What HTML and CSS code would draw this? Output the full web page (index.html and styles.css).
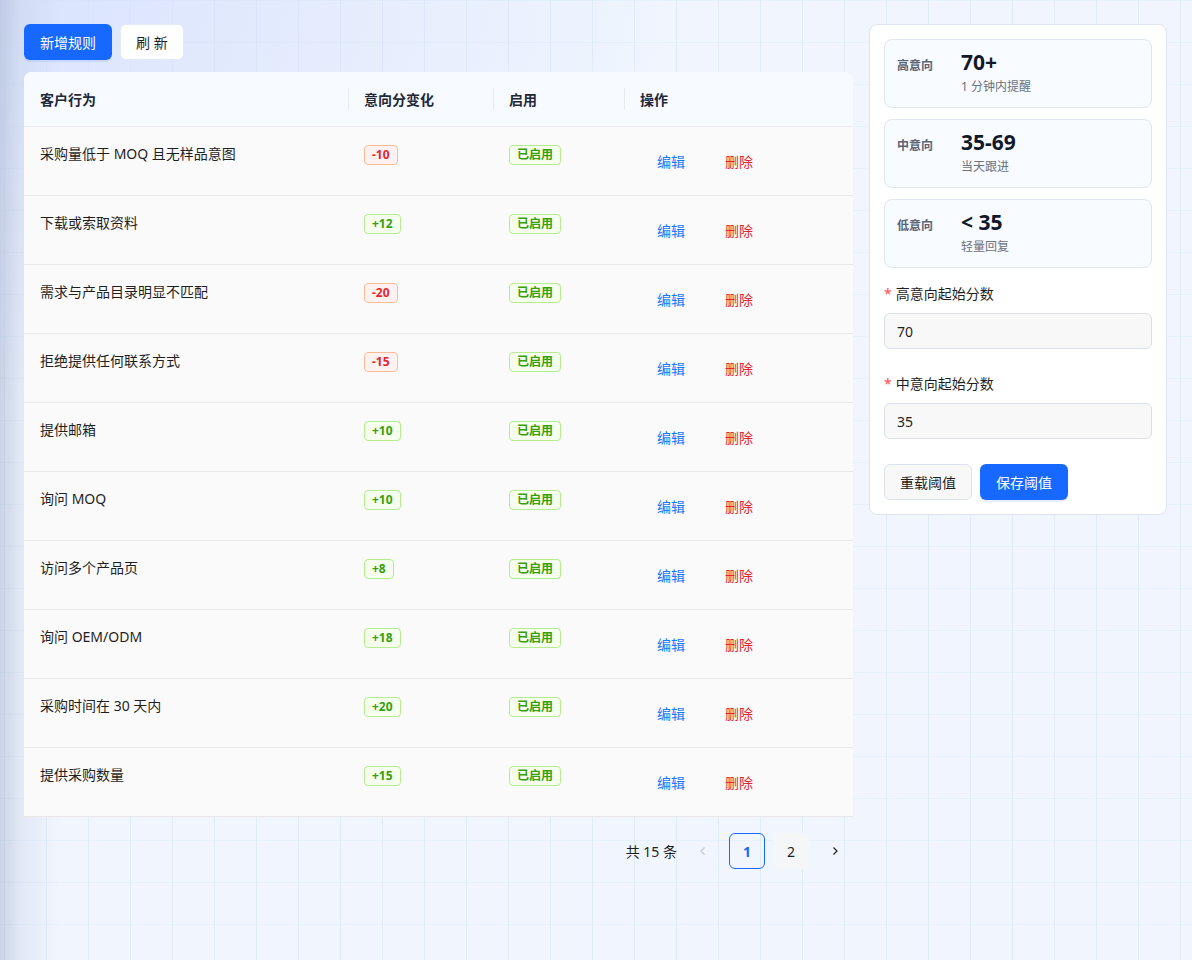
FILE: index.html
```html
<!DOCTYPE html>
<html lang="zh-CN">
<head>
    <meta charset="UTF-8">
    <meta name="viewport" content="width=device-width, initial-scale=1.0">
    <title>意向评分规则</title>
    <link rel="stylesheet" href="styles.css">
</head>
<body>
    <div class="page">
        <div class="main">
            <div class="toolbar">
                <button class="btn btn-primary">新增规则</button>
                <button class="btn btn-default">刷 新</button>
            </div>
            <div class="table-card">
                <table class="rules">
                    <colgroup>
                        <col style="width:324px">
                        <col style="width:145px">
                        <col style="width:131px">
                        <col>
                    </colgroup>
                    <thead>
                        <tr>
                            <th>客户行为</th>
                            <th class="sep">意向分变化</th>
                            <th class="sep">启用</th>
                            <th class="sep">操作</th>
                        </tr>
                    </thead>
                    <tbody>
                        <tr>
                            <td>采购量低于 MOQ 且无样品意图</td>
                            <td><span class="tag tag-red">-10</span></td>
                            <td><span class="tag tag-green">已启用</span></td>
                            <td class="actions"><a class="link">编辑</a><a class="link danger">删除</a></td>
                        </tr>
                        <tr>
                            <td>下载或索取资料</td>
                            <td><span class="tag tag-green">+12</span></td>
                            <td><span class="tag tag-green">已启用</span></td>
                            <td class="actions"><a class="link">编辑</a><a class="link danger">删除</a></td>
                        </tr>
                        <tr>
                            <td>需求与产品目录明显不匹配</td>
                            <td><span class="tag tag-red">-20</span></td>
                            <td><span class="tag tag-green">已启用</span></td>
                            <td class="actions"><a class="link">编辑</a><a class="link danger">删除</a></td>
                        </tr>
                        <tr>
                            <td>拒绝提供任何联系方式</td>
                            <td><span class="tag tag-red">-15</span></td>
                            <td><span class="tag tag-green">已启用</span></td>
                            <td class="actions"><a class="link">编辑</a><a class="link danger">删除</a></td>
                        </tr>
                        <tr>
                            <td>提供邮箱</td>
                            <td><span class="tag tag-green">+10</span></td>
                            <td><span class="tag tag-green">已启用</span></td>
                            <td class="actions"><a class="link">编辑</a><a class="link danger">删除</a></td>
                        </tr>
                        <tr>
                            <td>询问 MOQ</td>
                            <td><span class="tag tag-green">+10</span></td>
                            <td><span class="tag tag-green">已启用</span></td>
                            <td class="actions"><a class="link">编辑</a><a class="link danger">删除</a></td>
                        </tr>
                        <tr>
                            <td>访问多个产品页</td>
                            <td><span class="tag tag-green">+8</span></td>
                            <td><span class="tag tag-green">已启用</span></td>
                            <td class="actions"><a class="link">编辑</a><a class="link danger">删除</a></td>
                        </tr>
                        <tr>
                            <td>询问 OEM/ODM</td>
                            <td><span class="tag tag-green">+18</span></td>
                            <td><span class="tag tag-green">已启用</span></td>
                            <td class="actions"><a class="link">编辑</a><a class="link danger">删除</a></td>
                        </tr>
                        <tr>
                            <td>采购时间在 30 天内</td>
                            <td><span class="tag tag-green">+20</span></td>
                            <td><span class="tag tag-green">已启用</span></td>
                            <td class="actions"><a class="link">编辑</a><a class="link danger">删除</a></td>
                        </tr>
                        <tr>
                            <td>提供采购数量</td>
                            <td><span class="tag tag-green">+15</span></td>
                            <td><span class="tag tag-green">已启用</span></td>
                            <td class="actions"><a class="link">编辑</a><a class="link danger">删除</a></td>
                        </tr>
                    </tbody>
                </table>
            </div>
            <div class="pager">
                <span class="total">共 15 条</span>
                <span class="page-btn disabled">
                    <svg width="12" height="12" viewBox="0 0 12 12"><path d="M7.5 2.5 4 6l3.5 3.5" fill="none" stroke="currentColor" stroke-width="1.2"/></svg>
                </span>
                <span class="page-btn active">1</span>
                <span class="page-btn shaded">2</span>
                <span class="page-btn">
                    <svg width="12" height="12" viewBox="0 0 12 12"><path d="M4.5 2.5 8 6l-3.5 3.5" fill="none" stroke="currentColor" stroke-width="1.2"/></svg>
                </span>
            </div>
        </div>

        <div class="side">
            <div class="level">
                <span class="level-name">高意向</span>
                <div>
                    <div class="level-value">70+</div>
                    <div class="level-desc">1 分钟内提醒</div>
                </div>
            </div>
            <div class="level">
                <span class="level-name">中意向</span>
                <div>
                    <div class="level-value">35-69</div>
                    <div class="level-desc">当天跟进</div>
                </div>
            </div>
            <div class="level">
                <span class="level-name">低意向</span>
                <div>
                    <div class="level-value">&lt; 35</div>
                    <div class="level-desc">轻量回复</div>
                </div>
            </div>

            <div class="field">
                <label><span class="req">*</span>高意向起始分数</label>
                <input type="text" value="70">
            </div>
            <div class="field">
                <label><span class="req">*</span>中意向起始分数</label>
                <input type="text" value="35">
            </div>
            <div class="side-actions">
                <button class="btn btn-light">重载阈值</button>
                <button class="btn btn-primary">保存阈值</button>
            </div>
        </div>
    </div>
</body>
</html>
```

FILE: styles.css
```css
html, body {
    margin: 0;
    height: 100%;
}
body {
    font-family: 'Noto Sans', 'Noto Sans CJK SC', sans-serif;
    font-size: 14px;
    color: #1f1f1f;
    background-color: #f1f6fe;
    background-image:
        linear-gradient(to right, rgba(170, 182, 210, 0.55) 0, rgba(190, 200, 225, 0.3) 20px, rgba(220, 228, 245, 0) 60px),
        radial-gradient(ellipse 700px 420px at 0 0, rgba(214, 225, 252, 0.9), rgba(214, 225, 252, 0)),
        linear-gradient(to right, rgba(205, 222, 250, 0.45) 1px, transparent 1px),
        linear-gradient(to bottom, rgba(214, 234, 250, 0.45) 1px, transparent 1px);
    background-size: 100% 100%, 100% 100%, 42px 42px, 42px 42px;
    background-position: 0 0, 0 0, 4px 0, 0 0;
    overflow: hidden;
}
.page {
    display: flex;
    align-items: flex-start;
    gap: 16px;
    padding: 24px;
}
.main {
    width: 829px;
}
.toolbar {
    display: flex;
    gap: 8px;
    margin-bottom: 12px;
}
.btn {
    font-family: inherit;
    font-size: 14px;
    height: 36px;
    padding: 0 15px;
    border-radius: 6px;
    border: 1px solid transparent;
    cursor: pointer;
}
.btn-primary {
    background-color: #1668ff;
    color: #fff;
    box-shadow: 0 2px 0 rgba(5, 95, 255, 0.1);
}
.btn-default {
    background-color: #fff;
    border-color: #e4e9f2;
    color: #1f1f1f;
}
.btn-light {
    background-color: #f8f8f8;
    border-color: #dbe2ee;
    color: #1f1f1f;
}
.table-card {
    background-color: #fafafa;
    border-radius: 8px 8px 0 0;
    overflow: hidden;
}
.rules {
    width: 100%;
    border-collapse: collapse;
    table-layout: fixed;
}
.rules th {
    height: 54px;
    padding: 0 16px;
    text-align: left;
    font-weight: 700;
    color: #1f2937;
    background-color: #f7faff;
    border-bottom: 1px solid #e8ebf0;
    position: relative;
}
.rules th.sep::before {
    content: "";
    position: absolute;
    left: 0;
    top: 16px;
    width: 1px;
    height: 22px;
    background-color: #e8ecf2;
}
.rules td {
    height: 69px;
    padding: 16px 16px 0;
    vertical-align: top;
    line-height: 22px;
    border-bottom: 1px solid #e8e8e8;
    box-sizing: border-box;
}
.tag {
    display: inline-block;
    font-size: 12px;
    font-weight: 700;
    line-height: 18px;
    padding: 0 7px;
    border-radius: 4px;
    border: 1px solid;
}
.tag-red {
    color: #e0282e;
    background-color: #fff2f0;
    border-color: #ffbb96;
}
.tag-green {
    color: #389e0d;
    background-color: #f6ffed;
    border-color: #b7eb8f;
}
.rules td.actions {
    padding-top: 23px;
    padding-left: 17px;
}
.link {
    display: inline-block;
    padding: 0 16px;
    margin-right: 8px;
    line-height: 24px;
    color: #1677ff;
    cursor: pointer;
}
.link.danger {
    color: #e3262d;
}
.pager {
    display: flex;
    justify-content: flex-end;
    align-items: center;
    gap: 8px;
    margin-top: 16px;
}
.total {
    color: #1f1f1f;
}
.page-btn {
    width: 36px;
    height: 36px;
    box-sizing: border-box;
    display: flex;
    align-items: center;
    justify-content: center;
    border-radius: 6px;
    color: #1f1f1f;
}
.page-btn.shaded {
    background-color: #f5f6f8;
}
.page-btn.active {
    border: 1px solid #1668ff;
    color: #1668ff;
    font-weight: 700;
}
.page-btn.disabled {
    color: #c2c8d2;
}
.side {
    width: 298px;
    box-sizing: border-box;
    background-color: #fff;
    border: 1px solid #dde5f0;
    border-radius: 8px;
    padding: 14px 14px 14px;
    display: flex;
    flex-direction: column;
}
.level {
    display: flex;
    align-items: flex-start;
    height: 69px;
    box-sizing: border-box;
    padding: 10px 12px 0;
    margin-bottom: 11px;
    border: 1px solid #dfe6f0;
    border-radius: 8px;
    background-color: #f8fbff;
}
.level-name {
    width: 64px;
    margin-top: 7px;
    font-size: 12px;
    line-height: 18px;
    font-weight: 700;
    color: #5b6475;
}
.level-value {
    font-size: 21px;
    font-weight: 700;
    line-height: 24px;
    margin-bottom: 4px;
    color: #111827;
}
.level-desc {
    font-size: 12px;
    line-height: 18px;
    color: #6b7280;
}
.field {
    margin-top: 4px;
    margin-bottom: 20px;
}
.field label {
    display: block;
    line-height: 22px;
    margin-bottom: 8px;
}
.req {
    color: #ff4d4f;
    margin-right: 4px;
}
.field input {
    width: 100%;
    height: 36px;
    box-sizing: border-box;
    padding: 0 12px;
    border: 1px solid #d9e0ec;
    border-radius: 6px;
    background-color: #f8f8f8;
    font-family: inherit;
    font-size: 14px;
    color: #1f1f1f;
}
.side-actions {
    display: flex;
    gap: 8px;
    margin-top: 5px;
}
```
